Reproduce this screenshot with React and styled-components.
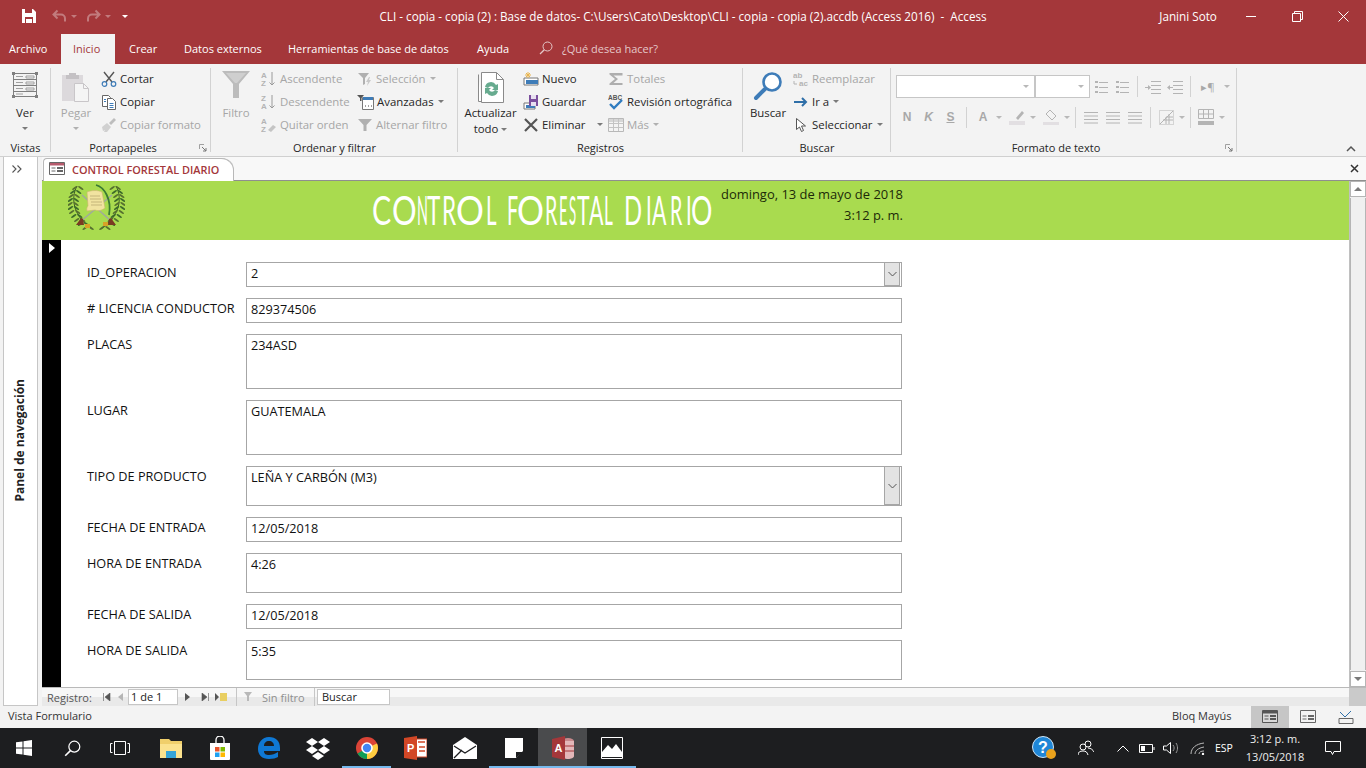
import styled, { createGlobalStyle } from 'styled-components';

const RED = '#a4373a';
const OFF = '#b4b4b4';
const UI = '"Open Sans", "Noto Sans", "Liberation Sans", sans-serif';

const Global = createGlobalStyle`
  html, body { margin: 0; padding: 0; background: #f3f3f3; }
  * { box-sizing: border-box; }
`;

/* ---------- icons ---------- */
const Ico = ({ w = 16, h = 16, children }) => (
  <svg width={w} height={h} viewBox={`0 0 ${w} ${h}`} fill="none" style={{ display: 'block', flex: 'none' }}>
    {children}
  </svg>
);

const Lines = ({ x, y, w, n, gap, color = OFF }) => (
  <>
    {Array.from({ length: n }).map((_, i) => (
      <path key={i} d={`M${x} ${y + i * gap + 0.5}h${w}`} stroke={color} />
    ))}
  </>
);

const Save = () => (
  <Ico w={16} h={16}>
    <path d="M1 1h11l3 3v11H1z" fill="#fff" />
    <path d="M4 1h7v4H4z" fill={RED} />
    <path d="M4 9h8v6H4z" fill={RED} />
    <path d="M5 11h6v4H5z" fill="#fff" />
  </Ico>
);
const Undo = ({ flip }) => (
  <Ico w={15} h={14}>
    <g transform={flip ? 'matrix(-1 0 0 1 15 0)' : undefined}>
      <path d="M5.5 1.5 1.5 5.5l4 4M2 5.5h7a4 4 0 0 1 4 4v3" stroke="#c27b7d" strokeWidth="2" />
    </g>
  </Ico>
);
const ViewIcon = () => (
  <Ico w={26} h={28}>
    <path d="M1.5 2.5h23v23h-23zM1.5 8.5h23M1.5 14.5h23M1.5 20.5h23" stroke="#7f7f7f" />
    <path d="M4 5.5h7M14 5h8v2h-8zM4 11.5h7M14 11h8v2h-8zM4 17.5h7M14 17h8v2h-8zM4 23h7" stroke="#a0a0a0" />
    <path d="M0 1h3v3H0zM23 1h3v3h-3zM0 24h3v3H0zM23 24h3v3h-3z" fill="#7f7f7f" />
  </Ico>
);
const PasteIcon = () => (
  <Ico w={30} h={32}>
    <path d="M1 4h21v26H1z" fill="#dcd9dc" />
    <path d="M8 2h7v2h3v4H5V4h3z" fill="#c4c1c4" />
    <path d="M13.5 12.5h9l5 5v13h-14z" fill="#f5f5f5" stroke="#c9c6c9" />
    <path d="M22.5 12.5v5h5" stroke="#c9c6c9" />
  </Ico>
);
const Scissors = () => (
  <Ico>
    <path d="M3 1l8 10M13 1 5 11" stroke="#555" strokeWidth="1.4" />
    <circle cx="3.5" cy="13" r="2.3" stroke="#3e7cb8" strokeWidth="1.2" />
    <circle cx="12.5" cy="13" r="2.3" stroke="#3e7cb8" strokeWidth="1.2" />
  </Ico>
);
const CopyIcon = () => (
  <Ico>
    <path d="M1.5 1.5h6l2 2v9h-8z" fill="#fff" stroke="#666" />
    <path d="M6.5 4.5h5l3 3v8h-8z" fill="#fff" stroke="#666" />
    <path d="M8.5 9.5h4M8.5 11.5h4M8.5 13.5h4" stroke="#3e7cb8" />
    <path d="M3 5.5h2M3 7.5h2" stroke="#3e7cb8" />
  </Ico>
);
const Brush = () => (
  <Ico>
    <path d="M1 10l5-4 4 4-4 5H3l1-2-2 1z" fill="#d0d0d0" />
    <path d="M8 6l5-5 2 2-5 5z" fill="#bdbdbd" />
  </Ico>
);
const Funnel = ({ big }) =>
  big ? (
    <Ico w={28} h={28}>
      <path d="M0 0h28L17 13v14h-6V13z" fill="#bcbcbc" />
      <path d="M4 2h20l-9 10h-2z" fill="#cfcfcf" />
    </Ico>
  ) : (
    <Ico>
      <path d="M1 2h14L9.5 8v6h-3V8z" fill="#b0b0b0" />
    </Ico>
  );
const SortIcon = ({ a, b, arrow = true }) => (
  <Ico>
    <text x="0" y="7" fontFamily="Liberation Sans" fontSize="8" fontWeight="700" fill={OFF}>{a}</text>
    <text x="0" y="15" fontFamily="Liberation Sans" fontSize="8" fontWeight="700" fill={OFF}>{b}</text>
    {arrow ? <path d="M11 1v13M8.5 11.5 11 14l2.5-2.5" stroke="#9a9a9a" /> : <path d="M7 13l5-5 3 2-5 5z" fill="#c4c4c4" />}
  </Ico>
);
const SelectionIcon = () => (
  <Ico>
    <path d="M1 2h11L8 7v6l-2 1V7z" fill="#b0b0b0" />
    <path d="M12 6 9 11h2l-1 4 4-6h-2l1-3z" fill="#c8c8c8" />
  </Ico>
);
const AdvancedIcon = () => (
  <Ico w={17} h={16}>
    <path d="M0 1h7L4.5 4v3H3V4z" fill="#555" />
    <path d="M5.5 3.5h11v12h-11z" fill="#fff" stroke="#777" />
    <path d="M6 3h10v3H6z" fill="#3e7cb8" />
    <path d="M8 12h1M11 12h1M14 12h1" stroke="#444" />
  </Ico>
);
const RefreshIcon = () => (
  <Ico w={28} h={32}>
    <path d="M1.5 3.5v27h3M4.5 1.5h15l7 7v23h-22z" stroke="#8a8a8a" fill="#fff" />
    <path d="M19.5 1.5v7h7" stroke="#8a8a8a" />
    <path d="M8 16a6 6 0 0 1 11-2l2-1v6h-6l2-2a3.5 3.5 0 0 0-6 0zM21 20a6 6 0 0 1-11 2l-2 1v-6h6l-2 2a3.5 3.5 0 0 0 6 0z" fill="#67ab8f" />
  </Ico>
);
const NewIcon = () => (
  <Ico>
    <path d="M1 7h14v7H1z" fill="#fff" stroke="#777" />
    <path d="M3 9h12v4H3z" fill="#3e7cb8" />
    <path d="M5 1v6M2 4h6M3 2l4 4M7 2 3 6" stroke="#e9b44c" />
  </Ico>
);
const SaveRecord = () => (
  <Ico>
    <path d="M1 9h11v6H1z" fill="#fff" stroke="#777" />
    <path d="M3 11h9v3H3z" fill="#3e7cb8" />
    <path d="M6 1h9v11H6z" fill="#7b4f9d" />
    <path d="M8 1h5v4H8zM8 8h5v4H8z" fill="#e8e0f0" />
  </Ico>
);
const Cross = () => (
  <Ico>
    <path d="M2 2l12 12M14 2 2 14" stroke="#555" strokeWidth="2.2" />
  </Ico>
);
const Sigma = () => (
  <Ico>
    <path d="M1.5 2h13v2.5H5.5L10 8l-4.5 4h9V14h-13v-1.5L7 8 1.5 3.5z" fill="#aeaeae" />
  </Ico>
);
const Spell = () => (
  <Ico>
    <text x="0" y="6" fontFamily="Liberation Sans" fontSize="6.5" fontWeight="700" fill="#555">ABC</text>
    <path d="M2 10l4 4 8-8" stroke="#2f7cc0" strokeWidth="2.4" />
  </Ico>
);
const GridOff = () => (
  <Ico>
    <path d="M.5 1.5h15v13H.5z" fill="#f4f4f4" stroke="#b8b8b8" />
    <path d="M1 2h14v3H1z" fill="#d6d6d6" />
    <path d="M.5 6.5h15M.5 10.5h15M5.5 2v12M10.5 2v12" stroke="#c4c4c4" />
  </Ico>
);
const Magnifier = () => (
  <Ico w={30} h={30}>
    <circle cx="19" cy="11" r="8.5" stroke="#3e7cb8" strokeWidth="2.6" fill="#fff" />
    <path d="M12 18 3 27" stroke="#3e7cb8" strokeWidth="4" strokeLinecap="round" />
  </Ico>
);
const ReplaceIcon = () => (
  <Ico>
    <text x="0" y="7" fontFamily="Liberation Sans" fontSize="8" fontWeight="700" fill={OFF}>ab</text>
    <text x="6" y="15" fontFamily="Liberation Sans" fontSize="8" fontWeight="700" fill={OFF}>ac</text>
    <path d="M1 10v3h3" stroke={OFF} />
  </Ico>
);
const GoTo = () => (
  <Ico>
    <path d="M1 8h12M9 4l4 4-4 4" stroke="#2f6fa8" strokeWidth="2" />
  </Ico>
);
const Pointer = () => (
  <Ico>
    <path d="M3.5 1.5v11l3-2.5 2 4.5 2-1-2-4.5h4z" fill="#fff" stroke="#555" />
  </Ico>
);
const Launcher = () => (
  <Ico w={8} h={8}>
    <path d="M.5 5V.5H5" stroke="#a0a0a0" />
    <path d="M3 3l4 4M7 4v3H4" stroke="#777" />
  </Ico>
);
const Glass = ({ color = '#e4c8c9', size = 14 }) => (
  <svg width={size} height={size} viewBox="0 0 14 14" fill="none" style={{ display: 'block', flex: 'none' }}>
    <circle cx="8.5" cy="5.5" r="4.5" stroke={color} />
    <path d="M5.3 8.8 1 13" stroke={color} strokeWidth="1.3" />
  </svg>
);

/* ---------- layout parts ---------- */
const Screen = styled.div`
  width: 1366px;
  height: 768px;
  overflow: hidden;
  display: flex;
  flex-direction: column;
  font-family: ${UI};
  font-size: 11.7px;
  color: #262626;
  background: #f3f3f3;
`;

const TitleBar = styled.div`
  height: 34px;
  flex: none;
  padding-bottom: 2px;
  background: ${RED};
  display: flex;
  align-items: center;
  color: #fff;
`;
const Qat = styled.div`
  width: 380px;
  display: flex;
  align-items: center;
  padding-left: 21px;
`;
const QatSlot = styled.div`
  width: ${(p) => p.$w}px;
  display: flex;
  align-items: center;
  gap: 4px;
`;
const DocTitle = styled.div`
  width: 781px;
  white-space: pre;
`;
const UserName = styled.div`
  width: 69px;
`;
const WinBtn = styled.div`
  width: 46px;
  display: flex;
  justify-content: center;
`;
const MiniCaret = styled.span`
  width: 0;
  height: 0;
  flex: none;
  border: 3px solid transparent;
  border-top: 3px solid ${(p) => p.$c || '#7a7a7a'};
  border-bottom: 0;
  display: inline-block;
  margin-left: ${(p) => p.$m ?? 1}px;
  vertical-align: middle;
`;

const TabBar = styled.div`
  height: 30px;
  flex: none;
  background: ${RED};
  display: flex;
  align-items: stretch;
  color: #fff;
  font-size: 11px;
`;
const MenuTab = styled.div`
  width: ${(p) => p.$w}px;
  padding-left: ${(p) => p.$pad ?? 0}px;
  padding-bottom: 2px;
  display: flex;
  align-items: center;
  gap: 9px;
  background: ${(p) => (p.$on ? '#f3f3f3' : 'transparent')};
  color: ${(p) => (p.$on ? RED : p.$dim ? '#e4c8c9' : '#fff')};
`;

const Ribbon = styled.div`
  height: 93px;
  flex: none;
  padding-top: 2px;
  display: flex;
  position: relative;
  background: #f3f3f3;
  border-bottom: 1px solid #d0d0d0;
  font-size: 11.4px;
`;
const Group = styled.div`
  width: ${(p) => p.$w}px;
  height: 90px;
  flex: none;
  display: flex;
  flex-direction: column;
  position: relative;

  &::after {
    content: '';
    position: absolute;
    right: 0;
    top: 2px;
    bottom: 4px;
    width: 1px;
    background: #d2d2d2;
  }
`;
const GroupBody = styled.div`
  height: 74px;
  display: flex;
`;
const GroupName = styled.div`
  height: 16px;
  line-height: 16px;
  text-align: center;
  font-size: 11px;
  padding-right: ${(p) => p.$shift ?? 0}px;
`;
const LauncherSpot = styled.div`
  position: absolute;
  right: 4px;
  bottom: 4px;
`;
const Large = styled.div`
  width: ${(p) => p.$w}px;
  flex: none;
  display: flex;
  flex-direction: column;
  align-items: center;
  color: ${(p) => (p.$off ? '#a6a6a6' : '#262626')};
  line-height: 16px;
`;
const LargeIcon = styled.div`
  height: 34px;
  margin-top: 5px;
  display: flex;
  justify-content: center;
`;
const LargeText = styled.div`
  height: 16px;
  white-space: nowrap;
`;
const LargeCaret = styled.div`
  height: 14px;
  display: flex;
  align-items: center;
  justify-content: center;
`;
const SmallCol = styled.div`
  width: ${(p) => p.$w}px;
  padding-top: 1px;
  flex: none;
  display: flex;
  flex-direction: column;
`;
const Small = styled.div`
  height: 23px;
  display: flex;
  align-items: center;
  gap: 3px;
  white-space: nowrap;
  color: ${(p) => (p.$off ? '#a6a6a6' : '#262626')};
`;

const FormatBody = styled.div`
  height: 74px;
  padding: 9px 0 0 5px;
  display: flex;
  flex-direction: column;
  gap: 7px;
`;
const FormatRow = styled.div`
  height: ${(p) => p.$h}px;
  display: flex;
  align-items: center;
`;
const Combo = styled.div`
  width: ${(p) => p.$w}px;
  height: 23px;
  background: #fff;
  border: 1px solid #c6c6c6;
  display: flex;
  align-items: center;
  justify-content: flex-end;
  padding-right: 5px;
`;
const Cell = styled.div`
  width: ${(p) => p.$w}px;
  margin-left: ${(p) => p.$ml ?? 0}px;
  flex: none;
  display: flex;
  align-items: center;
  justify-content: center;
  color: #a8a8a8;
  font: ${(p) => (p.$letter ? 'bold 12px "Liberation Sans", sans-serif' : 'inherit')};
`;
const Sep = styled.div`
  width: 1px;
  height: 21px;
  margin-left: ${(p) => p.$ml ?? 4}px;
  background: #d2d2d2;
  flex: none;
`;
const Collapse = styled.div`
  position: absolute;
  right: 10px;
  top: 81px;
`;

const DocRow = styled.div`
  flex: 1;
  min-height: 0;
  display: flex;
  padding-left: 3px;
`;
const NavPane = styled.div`
  width: 35px;
  background: #fff;
  border: 1px solid #c6c6c6;
  border-top: 0;
  display: flex;
  flex-direction: column;
  align-items: center;
`;
const NavChevrons = styled.div`
  height: 24px;
  margin-right: 7px;
  padding-top: 8px;
`;
const NavLabel = styled.div`
  margin-top: 198px;
  writing-mode: vertical-rl;
  transform: rotate(180deg);
  font-weight: 700;
  font-size: 12px;
  color: #222;
  padding-left: 3px;
`;
const DocArea = styled.div`
  flex: 1;
  min-width: 0;
  margin-left: 4px;
  display: flex;
  flex-direction: column;
`;
const DocTabs = styled.div`
  height: 24px;
  flex: none;
  background: #f8f8f8;
  border-bottom: 1px solid #8f8f8f;
  display: flex;
  align-items: flex-end;
  justify-content: space-between;
`;
const DocTab = styled.div`
  width: 190px;
  height: 23px;
  margin-bottom: -1px;
  margin-left: 1px;
  background: #fff;
  border: 1px solid #b8b8b8;
  border-bottom: 0;
  border-right: 0;
  border-radius: 4px 12px 0 0;
  display: flex;
  align-items: center;
  gap: 7px;
  padding: 0 0 2px 5px;
  color: ${RED};
  font-weight: 600;
  font-size: 10.9px;
  white-space: nowrap;
  box-shadow: 1px 0 0 #b8b8b8;
`;
const TabClose = styled.div`
  align-self: center;
  padding-right: 7px;
`;

const Viewport = styled.div`
  height: 506px;
  flex: none;
  display: flex;
`;
const FormPage = styled.div`
  width: 1307px;
  background: #fff;
  display: flex;
  flex-direction: column;
`;
const FormHead = styled.div`
  height: 59px;
  flex: none;
  background: #a9db4f;
  display: flex;
  padding-left: 26px;
`;
const Crest = styled.div`
  width: 57px;
  padding-top: 2px;
`;
const FormTitle = styled.div`
  width: 352px;
  margin-left: 235px;
  padding: 6px 0 0 12px;
  display: flex;
  font: 400 41px/46px Lato, "Open Sans", sans-serif;
  color: #fff;
  white-space: pre;
`;
const Glyph = styled.span`
  flex: none;
  width: ${(p) => p.$w}px;
  transform: scaleX(${(p) => p.$s});
  transform-origin: 0 50%;
`;
const FormDate = styled.div`
  width: 191px;
  padding-top: 3px;
  text-align: right;
  font-size: 12.95px;
  line-height: 21px;
  color: #1c2a08;
`;
const FormBody = styled.div`
  flex: 1;
  display: flex;
`;
const Selector = styled.div`
  width: 19px;
  background: #000;
  padding: 3px 0 0 7px;
`;
const Fields = styled.div`
  padding: 22px 0 0 26px;
  display: flex;
  flex-direction: column;
  gap: 11px;
`;
const Row = styled.div`
  display: flex;
  height: ${(p) => p.$h}px;
`;
const Label = styled.div`
  width: 159px;
  padding-top: 2px;
  font-size: 12.7px;
  line-height: 17px;
  color: #111;
  white-space: nowrap;
`;
const Field = styled.div`
  width: 656px;
  border: 1px solid #a6a6a6;
  padding: 2px 0 0 4px;
  font-size: 12.7px;
  line-height: 17px;
  color: #111;
  position: relative;
  background: #fff;
`;
const ComboBtn = styled.div`
  position: absolute;
  right: 1px;
  top: 0;
  bottom: 0;
  width: 16px;
  background: #e3e3e3;
  border: 1px solid #a6a6a6;
  border-width: 0 1px 1px 1px;
  display: flex;
  align-items: center;
  justify-content: center;
`;
const Scrollbar = styled.div`
  width: 17px;
  background: #f0f0f0;
  border-left: 1px solid #c0c0c0;
  display: flex;
  flex-direction: column;
  align-items: stretch;
`;
const ScrollBtn = styled.div`
  height: 16px;
  flex: none;
  display: flex;
  align-items: center;
  justify-content: center;
  background: #fff;
  border: 1px solid #b5b5b5;
`;
const ScrollThumb = styled.div`
  flex: 1;
  margin: 1px 0;
  background: #f0f0f0;
  border: 1px solid #b5b5b5;
  border-width: 0 1px;
`;
const Arrow = styled.span`
  width: 0;
  height: 0;
  border: 4px solid transparent;
  ${(p) => (p.$up ? 'border-top: 0; border-bottom: 4px solid #7a7a7a;' : 'border-bottom: 0; border-top: 4px solid #7a7a7a;')}
`;

const RecordBar = styled.div`
  height: 20px;
  flex: none;
  display: flex;
  align-items: center;
  border-top: 1px solid #b9b9b9;
  border-bottom: 1px solid #b9b9b9;
  background: linear-gradient(#f7f7f7 50%, #e9e9e9 50%);
  font-size: 11px;
  color: #555;
`;
const RecText = styled.div`
  width: ${(p) => p.$w}px;
  margin-left: ${(p) => p.$ml ?? 0}px;
  white-space: nowrap;
  color: ${(p) => (p.$off ? '#8f8f8f' : '#555')};
`;
const RecInput = styled.div`
  width: ${(p) => p.$w}px;
  height: 16px;
  margin-left: ${(p) => p.$ml ?? 0}px;
  padding-left: ${(p) => p.$pad ?? 2}px;
  line-height: 14px;
  background: #fff;
  border: 1px solid #c6c6c6;
  color: #222;
`;
const RecBtn = styled.div`
  width: ${(p) => p.$w ?? 14}px;
  display: flex;
  align-items: center;
  justify-content: center;
`;
const RecSep = styled.div`
  width: 1px;
  height: 18px;
  margin-left: ${(p) => p.$ml}px;
  background: #c6c6c6;
`;
const RecRest = styled.div`
  flex: 1;
`;
const Corner = styled.div`
  width: 17px;
  height: 18px;
  background: #cacaca;
`;

const StatusBar = styled.div`
  height: 22px;
  flex: none;
  display: flex;
  align-items: center;
  background: #f3f3f3;
  font-size: 11px;
  padding-left: 8px;
  color: #333;
`;
const StatusText = styled.div`
  width: ${(p) => p.$w}px;
  margin-top: -3px;
  white-space: nowrap;
`;
const ViewBtn = styled.div`
  width: 38px;
  height: 22px;
  display: flex;
  align-items: center;
  justify-content: center;
  background: ${(p) => (p.$on ? '#c6c6c6' : 'transparent')};
`;

const Taskbar = styled.div`
  height: 40px;
  flex: none;
  background: #1d1e20;
  display: flex;
  color: #fff;
`;
const Slot = styled.div`
  width: ${(p) => p.$w ?? 49}px;
  margin-left: ${(p) => p.$ml ?? 0}px;
  flex: none;
  display: flex;
  align-items: center;
  justify-content: center;
  background: ${(p) => (p.$on ? '#4a4b4d' : 'transparent')};
  box-shadow: ${(p) => (p.$open ? 'inset 0 -2px 0 #76b9ed' : 'none')};
`;
const Lang = styled(Slot)`
  font-size: 10.5px;
`;
const Clock = styled.div`
  text-align: center;
  font-size: 11px;
  line-height: 18px;
  width: 76px;
  padding-top: 2px;
  color: #eee;
  flex: none;
`;

/* ---------- data ---------- */
const rows = [
  { label: 'ID_OPERACION', value: '2', h: 25, combo: true },
  { label: '# LICENCIA CONDUCTOR', value: '829374506', h: 25 },
  { label: 'PLACAS', value: '234ASD', h: 55 },
  { label: 'LUGAR', value: 'GUATEMALA', h: 55 },
  { label: 'TIPO DE PRODUCTO', value: 'LEÑA Y CARBÓN (M3)', h: 40, combo: true },
  { label: 'FECHA DE ENTRADA', value: '12/05/2018', h: 25 },
  { label: 'HORA DE ENTRADA', value: '4:26', h: 40 },
  { label: 'FECHA DE SALIDA', value: '12/05/2018', h: 25 },
  { label: 'HORA DE SALIDA', value: '5:35', h: 40 },
];

// the reference title is an art deco face: wide round letters, very narrow straight ones
const titleGlyphs = [
  ['C', 20, 0.7], ['O', 25, 0.75], ['N', 10, 0.35], ['T', 15, 0.55], ['R', 14, 0.55], ['O', 30, 0.85], ['L', 21, 0.5],
  [' ', 0, 1],
  ['F', 10, 0.48], ['O', 28, 0.82], ['R', 14, 0.48], ['E', 10, 0.36], ['S', 8, 0.32], ['T', 12, 0.52], ['A', 15, 0.52], ['L', 20, 0.42],
  [' ', 0, 1],
  ['D', 22, 0.58], ['I', 6, 0.5], ['A', 18, 0.52], ['R', 16, 0.48], ['I', 5, 0.5], ['O', 22, 0.65],
];

function CoatOfArms() {
  const leaves = [];
  for (let i = 0; i < 11; i++) {
    const ly = 5 + i * 4;
    const lx = 5 + (i - 4) * (i - 4) * (i > 4 ? 0.42 : 0.3);
    const fill = i % 2 ? '#3d6b2a' : '#56702f';
    const rx = 57 - lx;
    leaves.push(<ellipse key={`a${i}`} cx={lx - 3} cy={ly} rx="3.2" ry="1" fill={fill} transform={`rotate(-35 ${lx - 3} ${ly})`} />);
    leaves.push(<ellipse key={`b${i}`} cx={lx + 3} cy={ly} rx="3.2" ry="1" fill={fill} transform={`rotate(35 ${lx + 3} ${ly})`} />);
    leaves.push(<ellipse key={`c${i}`} cx={rx + 3} cy={ly} rx="3.2" ry="1" fill={fill} transform={`rotate(35 ${rx + 3} ${ly})`} />);
    leaves.push(<ellipse key={`d${i}`} cx={rx - 3} cy={ly} rx="3.2" ry="1" fill={fill} transform={`rotate(-35 ${rx - 3} ${ly})`} />);
  }
  return (
    <Ico w={57} h={50}>
      <path d="M9 3C2 16 6 34 24 46M48 3c7 13 3 31-15 43" stroke="#3e5f25" />
      {leaves}
      <path d="M12 39 44 12M44 39 14 12" stroke="#a0a79f" strokeWidth="1.3" />
      <path d="M28 2c8 2 16 14 13 30" stroke="#3a7a33" strokeWidth="1.8" />
      <path d="M19 9c5-2 11-2 15 0l3 16c-4 3-7 3-10 2l-8 1c-1-3 1-5 1-5z" fill="#f1e3a0" stroke="#c9b56a" strokeWidth=".6" />
      <path d="M22 13h10M22 16h11M23 19h11M23 22h11" stroke="#b3a26a" strokeWidth=".7" />
      <path d="M8 42l5-7 2 1 1 6zM48 42l-5-7-2 1-1 6z" fill="#7a3b22" />
      <path d="M17 41h5v4h-5zM35 39h5v4h-5z" fill="#d8a326" />
    </Ico>
  );
}

const FormIcon = ({ stroke = '#666', fill = '#fff', head = '#b65a6c' }) => (
  <Ico>
    <path d="M.5 1.5h15v12H.5z" fill={fill} stroke={stroke} />
    <path d="M1 2h14v2.5H1z" fill={head} />
    <path d="M2.5 7h4M2.5 10h4" stroke={stroke} />
    <path d="M8 6h6v2H8zM8 9h6v2H8z" fill={stroke} />
  </Ico>
);

const WindowsLogo = () => (
  <Ico w={16} h={16}>
    <path d="M0 2.3 6.5 1.4V7.5H0zM7.5 1.3 16 0v7.5H7.5zM0 8.5h6.5v6.1L0 13.7zM7.5 8.5H16V16l-8.5-1.2z" fill="#fff" />
  </Ico>
);

export default function App() {
  return (
    <Screen>
      <Global />
      <TitleBar>
        <Qat>
          <QatSlot $w={31}><Save /></QatSlot>
          <QatSlot $w={34}><Undo /><MiniCaret $c="#c27b7d" $m={0} /></QatSlot>
          <QatSlot $w={33}><Undo flip /><MiniCaret $c="#c27b7d" $m={0} /></QatSlot>
          <QatSlot $w={10}><MiniCaret $c="#fff" $m={3} /></QatSlot>
        </Qat>
        <DocTitle>CLI - copia - copia (2) : Base de datos- C:\Users\Cato\Desktop\CLI - copia - copia (2).accdb (Access 2016)  -  Access</DocTitle>
        <UserName>Janini Soto</UserName>
        <WinBtn><Ico w={11} h={11}><path d="M0 5.5h10" stroke="#fff" /></Ico></WinBtn>
        <WinBtn><Ico w={11} h={11}><path d="M.5 2.5h8v8h-8zM2.5 2.5v-2h8v8h-2" stroke="#fff" /></Ico></WinBtn>
        <WinBtn><Ico w={11} h={11}><path d="M.5.5l10 10M10.5.5l-10 10" stroke="#fff" /></Ico></WinBtn>
      </TitleBar>

      <TabBar>
        <MenuTab $w={61} $pad={9}>Archivo</MenuTab>
        <MenuTab $w={54} $pad={12} $on>Inicio</MenuTab>
        <MenuTab $w={69} $pad={14}>Crear</MenuTab>
        <MenuTab $w={104}>Datos externos</MenuTab>
        <MenuTab $w={189}>Herramientas de base de datos</MenuTab>
        <MenuTab $w={62}>Ayuda</MenuTab>
        <MenuTab $w={200} $dim><Glass />¿Qué desea hacer?</MenuTab>
      </TabBar>

      <Ribbon>
        <Group $w={51}>
          <GroupBody>
            <Large $w={50}>
              <LargeIcon><ViewIcon /></LargeIcon>
              <LargeText>Ver</LargeText>
              <LargeCaret><MiniCaret $m={0} /></LargeCaret>
            </Large>
          </GroupBody>
          <GroupName>Vistas</GroupName>
        </Group>

        <Group $w={160}>
          <GroupBody>
            <Large $w={50} $off>
              <LargeIcon><PasteIcon /></LargeIcon>
              <LargeText>Pegar</LargeText>
              <LargeCaret><MiniCaret $m={0} $c="#b0b0b0" /></LargeCaret>
            </Large>
            <SmallCol $w={105}>
              <Small><Scissors />Cortar</Small>
              <Small><CopyIcon />Copiar</Small>
              <Small $off><Brush />Copiar formato</Small>
            </SmallCol>
          </GroupBody>
          <GroupName $shift={16}>Portapapeles</GroupName>
          <LauncherSpot><Launcher /></LauncherSpot>
        </Group>

        <Group $w={247}>
          <GroupBody>
            <Large $w={50} $off>
              <LargeIcon><Funnel big /></LargeIcon>
              <LargeText>Filtro</LargeText>
            </Large>
            <SmallCol $w={96}>
              <Small $off><SortIcon a="A" b="Z" />Ascendente</Small>
              <Small $off><SortIcon a="Z" b="A" />Descendente</Small>
              <Small $off><SortIcon a="A" b="Z" arrow={false} />Quitar orden</Small>
            </SmallCol>
            <SmallCol $w={100}>
              <Small $off><SelectionIcon />Selección<MiniCaret $c="#b0b0b0" /></Small>
              <Small><AdvancedIcon />Avanzadas<MiniCaret /></Small>
              <Small $off><Funnel />Alternar filtro</Small>
            </SmallCol>
          </GroupBody>
          <GroupName>Ordenar y filtrar</GroupName>
        </Group>

        <Group $w={285}>
          <GroupBody>
            <Large $w={65}>
              <LargeIcon><RefreshIcon /></LargeIcon>
              <LargeText>Actualizar</LargeText>
              <LargeText>todo<MiniCaret $m={3} /></LargeText>
            </Large>
            <SmallCol $w={85}>
              <Small><NewIcon />Nuevo</Small>
              <Small><SaveRecord />Guardar</Small>
              <Small><Cross />Eliminar<MiniCaret $m={9} /></Small>
            </SmallCol>
            <SmallCol $w={130}>
              <Small $off><Sigma />Totales</Small>
              <Small><Spell />Revisión ortográfica</Small>
              <Small $off><GridOff />Más<MiniCaret $c="#b0b0b0" /></Small>
            </SmallCol>
          </GroupBody>
          <GroupName>Registros</GroupName>
        </Group>

        <Group $w={148}>
          <GroupBody>
            <Large $w={50}>
              <LargeIcon><Magnifier /></LargeIcon>
              <LargeText>Buscar</LargeText>
            </Large>
            <SmallCol $w={95}>
              <Small $off><ReplaceIcon />Reemplazar</Small>
              <Small><GoTo />Ir a<MiniCaret /></Small>
              <Small><Pointer />Seleccionar<MiniCaret /></Small>
            </SmallCol>
          </GroupBody>
          <GroupName>Buscar</GroupName>
        </Group>

        <Group $w={346}>
          <FormatBody>
            <FormatRow $h={23}>
              <Combo $w={139}><MiniCaret $c="#b8b8b8" /></Combo>
              <Combo $w={55}><MiniCaret $c="#b8b8b8" /></Combo>
              <Cell $w={21}>
                <Ico w={14} h={14}><Lines x={5} y={2} w={9} n={3} gap={5} /><path d="M1 1h3v2H1zM1 6h3v2H1zM1 11h3v2H1z" fill={OFF} /></Ico>
              </Cell>
              <Cell $w={22}>
                <Ico w={14} h={14}><Lines x={5} y={2} w={9} n={3} gap={5} /><path d="M1 1h3v2H1zM1 6h3v2H1zM1 11h3v2H1z" fill={OFF} /></Ico>
              </Cell>
              <Sep $ml={4} />
              <Cell $w={22} $ml={4}>
                <Ico w={16} h={14}><Lines x={6} y={1} w={10} n={4} gap={4} /><path d="M0 7h3V5l3 2.5L3 10V8H0z" fill={OFF} /></Ico>
              </Cell>
              <Cell $w={22}>
                <Ico w={16} h={14}><Lines x={6} y={1} w={10} n={4} gap={4} /><path d="M6 7H3V5L0 7.5 3 10V8h3z" fill={OFF} /></Ico>
              </Cell>
              <Sep $ml={4} />
              <Cell $w={26} $ml={4}>▸¶</Cell>
              <MiniCaret $c="#b8b8b8" $m={3} />
            </FormatRow>
            <FormatRow $h={24}>
              <Cell $w={22} $letter>N</Cell>
              <Cell $w={21} $letter><i>K</i></Cell>
              <Cell $w={23} $letter><u>S</u></Cell>
              <Sep $ml={4} />
              <Cell $w={18} $ml={7} $letter>A</Cell>
              <MiniCaret $c="#b8b8b8" $m={4} />
              <Cell $w={20} $ml={5}>
                <Ico w={16} h={16}><path d="M7 9l6-7 2 2-6 7z" fill={OFF} /><path d="M0 12h16v4H0z" fill="#e2dfe2" /></Ico>
              </Cell>
              <MiniCaret $c="#b8b8b8" $m={3} />
              <Cell $w={20} $ml={5}>
                <Ico w={16} h={16}><path d="M7 1l6 6-4 4-6-6z" stroke={OFF} /><path d="M0 13h16v3H0z" fill="#e2dfe2" /></Ico>
              </Cell>
              <MiniCaret $c="#b8b8b8" $m={3} />
              <Sep $ml={5} />
              <Cell $w={22} $ml={4}>
                <Ico w={14} h={13}><Lines x={0} y={1} w={14} n={4} gap={3.5} /></Ico>
              </Cell>
              <Cell $w={22}>
                <Ico w={14} h={13}><Lines x={0} y={1} w={14} n={4} gap={3.5} /></Ico>
              </Cell>
              <Cell $w={22}>
                <Ico w={14} h={13}><Lines x={0} y={1} w={14} n={4} gap={3.5} /></Ico>
              </Cell>
              <Sep $ml={4} />
              <Cell $w={22} $ml={4}>
                <Ico w={15} h={15}><path d="M.5.5h14v14H.5z" stroke={OFF} strokeDasharray="1 1" /><path d="M1 14 14 1M7 14V7h7M10 14V4M4 10h10" stroke={OFF} /></Ico>
              </Cell>
              <MiniCaret $c="#b8b8b8" $m={2} />
              <Sep $ml={5} />
              <Cell $w={22} $ml={4}>
                <Ico w={16} h={16}><path d="M.5.5h15v9H.5zM.5 5h15M5.5.5v9M10.5.5v9" stroke={OFF} /><path d="M0 12h16v4H0z" fill={OFF} /></Ico>
              </Cell>
              <MiniCaret $c="#b8b8b8" $m={2} />
            </FormatRow>
          </FormatBody>
          <GroupName $shift={16}>Formato de texto</GroupName>
          <LauncherSpot><Launcher /></LauncherSpot>
        </Group>
        <Collapse>
          <Ico w={10} h={7}><path d="M1 6l4-4 4 4" stroke="#555" strokeWidth="1.5" /></Ico>
        </Collapse>
      </Ribbon>

      <DocRow>
        <NavPane>
          <NavChevrons>
            <Ico w={10} h={8}><path d="M.5.5 4 4 .5 7.5M5.5.5 9 4 5.5 7.5" stroke="#555" strokeWidth="1.1" /></Ico>
          </NavChevrons>
          <NavLabel>Panel de navegación</NavLabel>
        </NavPane>
        <DocArea>
          <DocTabs>
            <DocTab><FormIcon />CONTROL FORESTAL DIARIO</DocTab>
            <TabClose>
              <Ico w={9} h={9}><path d="M1 1l7 7M8 1 1 8" stroke="#333" strokeWidth="1.5" /></Ico>
            </TabClose>
          </DocTabs>
          <Viewport>
            <FormPage>
              <FormHead>
                <Crest><CoatOfArms /></Crest>
                <FormTitle>
                  {titleGlyphs.map(([c, w, s], i) => (
                    <Glyph key={i} $w={w} $s={s}>{c}</Glyph>
                  ))}
                </FormTitle>
                <FormDate>domingo, 13 de mayo de 2018<br />3:12 p. m.</FormDate>
              </FormHead>
              <FormBody>
                <Selector>
                  <Ico w={7} h={10}><path d="M0 0l6 5-6 5z" fill="#fff" /></Ico>
                </Selector>
                <Fields>
                  {rows.map((r) => (
                    <Row key={r.label} $h={r.h}>
                      <Label>{r.label}</Label>
                      <Field>
                        {r.value}
                        {r.combo && (
                          <ComboBtn>
                            <Ico w={9} h={6}><path d="M.5 1 4.5 5l4-4" stroke="#555" /></Ico>
                          </ComboBtn>
                        )}
                      </Field>
                    </Row>
                  ))}
                </Fields>
              </FormBody>
            </FormPage>
            <Scrollbar>
              <ScrollBtn><Arrow $up /></ScrollBtn>
              <ScrollThumb />
              <ScrollBtn><Arrow /></ScrollBtn>
            </Scrollbar>
          </Viewport>
          <RecordBar>
            <RecText $w={53} $ml={5}>Registro:</RecText>
            <RecBtn><Ico w={8} h={8}><path d="M.5 0v8M7 0 2 4l5 4z" fill="#555" stroke="#555" strokeWidth=".6" /></Ico></RecBtn>
            <RecBtn><Ico w={6} h={8}><path d="M5 0 0 4l5 4z" fill="#b5b5b5" /></Ico></RecBtn>
            <RecInput $w={50}>1 de 1</RecInput>
            <RecBtn $w={20}><Ico w={6} h={8}><path d="M0 0l5 4-5 4z" fill="#555" /></Ico></RecBtn>
            <RecBtn><Ico w={8} h={8}><path d="M1 0l5 4-5 4zM7.5 0v8" fill="#555" stroke="#555" strokeWidth=".6" /></Ico></RecBtn>
            <RecBtn $w={17}><Ico w={12} h={8}><path d="M0 0l4 4-4 4z" fill="#555" /><path d="M5 0h7v8H5z" fill="#e9cf62" /></Ico></RecBtn>
            <RecSep $ml={7} />
            <RecBtn $w={25}><Ico w={11} h={10}><path d="M0 0h8L5 4v5H3V4z" fill="#b9b9b9" /></Ico></RecBtn>
            <RecText $w={52} $off>Sin filtro</RecText>
            <RecSep $ml={0} />
            <RecInput $w={73} $ml={2} $pad={4}>Buscar</RecInput>
            <RecRest />
            <Corner />
          </RecordBar>
        </DocArea>
      </DocRow>

      <StatusBar>
        <StatusText $w={1164}>Vista Formulario</StatusText>
        <StatusText $w={79}>Bloq Mayús</StatusText>
        <ViewBtn $on><FormIcon stroke="#555" fill="#d8d8d8" head="#555" /></ViewBtn>
        <ViewBtn><FormIcon stroke="#666" fill="#f3f3f3" head="#f3f3f3" /></ViewBtn>
        <ViewBtn>
          <Ico><path d="M1 9.5h14v5H1z" stroke="#666" /><path d="M2 3l5 5 6-6" stroke="#2f6fa8" /></Ico>
        </ViewBtn>
      </StatusBar>

      <Taskbar>
        <Slot $w={48}><WindowsLogo /></Slot>
        <Slot $w={48}>
          <Glass color="#fff" size={17} />
        </Slot>
        <Slot $w={48}>
          <Ico w={20} h={16}><path d="M4.5 1.5h11v13h-11zM2.5 3.5h-2v9h2M17.5 3.5h2v9h-2" stroke="#fff" /></Ico>
        </Slot>
        <Slot $ml={2}>
          <Ico w={22} h={20}><path d="M0 1h9l2 2h11v17H0z" fill="#f0cf6b" /><path d="M0 6h22v14H0z" fill="#fbe28e" /><path d="M6 13h10v7H6z" fill="#35a4d8" /></Ico>
        </Slot>
        <Slot>
          <Ico w={22} h={24}>
            <path d="M1 7h20v16a1 1 0 0 1-1 1H2a1 1 0 0 1-1-1z" fill="#fff" />
            <path d="M7 7V4a4 4 0 0 1 8 0v3" stroke="#fff" strokeWidth="1.3" />
            <path d="M6 11h4.5v4.5H6z" fill="#e8532b" /><path d="M11.5 11H16v4.5h-4.5z" fill="#7eb900" /><path d="M6 16.5h4.5V21H6z" fill="#1ea1f1" /><path d="M11.5 16.5H16V21h-4.5z" fill="#ffb900" />
          </Ico>
        </Slot>
        <Slot>
          <Ico w={22} h={24}>
            <path d="M11 1C4 1 0 7 0 13c0 6 4 10 11 10 4 0 7-1 9-2v-5c-3 2-6 3-9 3-3 0-5-1-5-4h16v-3C22 5 18 1 11 1zM6 10c0-3 2-5 5-5s5 2 5 5z" fill="#0f78d4" />
          </Ico>
        </Slot>
        <Slot>
          <Ico w={24} h={23}>
            <path d="M6 1l6 4-6 4-6-4zM18 1l6 4-6 4-6-4zM6 9l6 4-6 4-6-4zM18 9l6 4-6 4-6-4zM12 15l6 4-6 4-6-4z" fill="#fff" />
          </Ico>
        </Slot>
        <Slot $open>
          <Ico w={22} h={22}>
            <circle cx="11" cy="11" r="11" fill="#db4437" />
            <path d="M11 11 1.5 16.5A11 11 0 0 0 11 22z" fill="#0f9d58" />
            <path d="M11 11v11A11 11 0 0 0 21 6.5z" fill="#ffcd40" />
            <circle cx="11" cy="11" r="5" fill="#4285f4" stroke="#fff" strokeWidth="1.6" />
          </Ico>
        </Slot>
        <Slot>
          <Ico w={23} h={24}>
            <path d="M9 3h14v18H9z" fill="#fff" stroke="#d24726" />
            <path d="M14 6h7M15 11h6M15 15h6" stroke="#d24726" strokeWidth="1.5" />
            <path d="M0 2l13-2v24L0 22z" fill="#d24726" />
            <text x="3" y="16" fontFamily="Liberation Sans" fontSize="11" fontWeight="700" fill="#fff">P</text>
          </Ico>
        </Slot>
        <Slot>
          <Ico w={24} h={22}>
            <path d="M0 8 12 0l12 8v14H0z" fill="#fff" />
            <path d="M1 9l11 7 11-7M1 21l8-8" stroke="#1d1e20" strokeWidth="1.3" />
          </Ico>
        </Slot>
        <Slot $open>
          <Ico w={18} h={20}><path d="M0 0h18v13l-7 7H0z" fill="#fff" /><path d="M11 14h7l-7 6z" fill="#1d1e20" /></Ico>
        </Slot>
        <Slot $on $open>
          <Ico w={22} h={24}>
            <ellipse cx="16" cy="5" rx="6" ry="3" fill="#c98a8d" />
            <path d="M10 5h12v15c0 2-3 3-6 3s-6-1-6-3z" fill="#e3b7b9" />
            <path d="M11 10h11M11 15h11" stroke="#a4373a" />
            <path d="M0 3l13-3v24L0 21z" fill="#a4373a" />
            <text x="2.5" y="16" fontFamily="Liberation Sans" fontSize="11" fontWeight="700" fill="#fff">A</text>
          </Ico>
        </Slot>
        <Slot $open>
          <Ico w={22} h={22}><path d="M.5.5h21v21H.5z" stroke="#fff" /><path d="M1 15l6-7 4 4 4-5 6 8v5H1z" fill="#fff" /></Ico>
        </Slot>

        <Slot $ml={388} $w={40}>
          <Ico w={24} h={24}>
            <circle cx="11" cy="11" r="10.5" fill="#1f86d6" stroke="#cfe6f7" />
            <text x="6" y="17" fontFamily="Liberation Sans" fontSize="16" fontWeight="700" fill="#fff">?</text>
            <circle cx="19" cy="18" r="5" fill="#eaa21c" />
          </Ico>
        </Slot>
        <Slot $w={40} $ml={2}>
          <Ico w={16} h={16}><circle cx="10" cy="4" r="3" stroke="#fff" /><circle cx="5" cy="7" r="3" stroke="#fff" /><path d="M0 15c0-3 2-4 5-4s4 1 5 4M10 8c3 0 5 2 6 4" stroke="#fff" /></Ico>
        </Slot>
        <Slot $w={24} $ml={5}>
          <Ico w={12} h={7}><path d="M.5 6.5 6 1l5.5 5.5" stroke="#fff" /></Ico>
        </Slot>
        <Slot $w={24}>
          <Ico w={16} h={9}><path d="M.5.5h13v8H.5z" stroke="#fff" /><path d="M2 2h4v5H2zM14.5 3h1v3h-1z" fill="#fff" /></Ico>
        </Slot>
        <Slot $w={24}>
          <Ico w={16} h={12}><path d="M.5 4h3l4-3.5v11l-4-3.5h-3z" stroke="#fff" /><path d="M10 3c1.5 2 1.5 4 0 6M13 1c2 3 2 7 0 10" stroke="#999" /></Ico>
        </Slot>
        <Slot $w={28}>
          <Ico w={15} h={13}><path d="M1 12C1 6 6 2 14 1M5 12c0-3 3-6 9-7M9 12c0-2 2-3 5-3" stroke="#bbb" /><circle cx="13" cy="12" r="1.2" fill="#fff" /></Ico>
        </Slot>
        <Lang $w={26}>ESP</Lang>
        <Clock>3:12 p. m.<br />13/05/2018</Clock>
        <Slot $w={28} $ml={6}>
          <Ico w={16} h={15}><path d="M.5.5h15v10H9l-1.5 3-1.5-3H.5z" stroke="#fff" /></Ico>
        </Slot>
      </Taskbar>
    </Screen>
  );
}
